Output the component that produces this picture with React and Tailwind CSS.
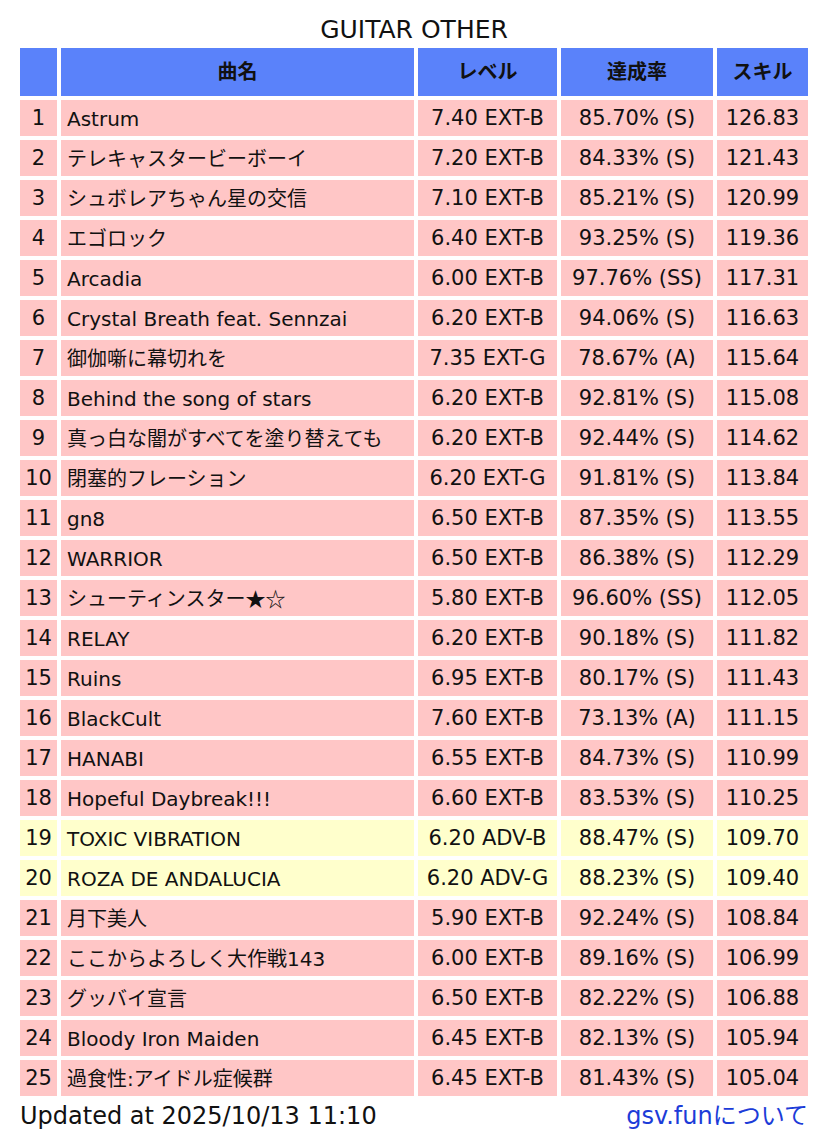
const rows = [
  ['Astrum', '7.40 EXT-B', '85.70% (S)', '126.83'],
  ['テレキャスタービーボーイ', '7.20 EXT-B', '84.33% (S)', '121.43'],
  ['シュボレアちゃん星の交信', '7.10 EXT-B', '85.21% (S)', '120.99'],
  ['エゴロック', '6.40 EXT-B', '93.25% (S)', '119.36'],
  ['Arcadia', '6.00 EXT-B', '97.76% (SS)', '117.31'],
  ['Crystal Breath feat. Sennzai', '6.20 EXT-B', '94.06% (S)', '116.63'],
  ['御伽噺に幕切れを', '7.35 EXT-G', '78.67% (A)', '115.64'],
  ['Behind the song of stars', '6.20 EXT-B', '92.81% (S)', '115.08'],
  ['真っ白な闇がすべてを塗り替えても', '6.20 EXT-B', '92.44% (S)', '114.62'],
  ['閉塞的フレーション', '6.20 EXT-G', '91.81% (S)', '113.84'],
  ['gn8', '6.50 EXT-B', '87.35% (S)', '113.55'],
  ['WARRIOR', '6.50 EXT-B', '86.38% (S)', '112.29'],
  ['シューティンスター★☆', '5.80 EXT-B', '96.60% (SS)', '112.05'],
  ['RELAY', '6.20 EXT-B', '90.18% (S)', '111.82'],
  ['Ruins', '6.95 EXT-B', '80.17% (S)', '111.43'],
  ['BlackCult', '7.60 EXT-B', '73.13% (A)', '111.15'],
  ['HANABI', '6.55 EXT-B', '84.73% (S)', '110.99'],
  ['Hopeful Daybreak!!!', '6.60 EXT-B', '83.53% (S)', '110.25'],
  ['TOXIC VIBRATION', '6.20 ADV-B', '88.47% (S)', '109.70'],
  ['ROZA DE ANDALUCIA', '6.20 ADV-G', '88.23% (S)', '109.40'],
  ['月下美人', '5.90 EXT-B', '92.24% (S)', '108.84'],
  ['ここからよろしく大作戦143', '6.00 EXT-B', '89.16% (S)', '106.99'],
  ['グッバイ宣言', '6.50 EXT-B', '82.22% (S)', '106.88'],
  ['Bloody Iron Maiden', '6.45 EXT-B', '82.13% (S)', '105.94'],
  ['過食性:アイドル症候群', '6.45 EXT-B', '81.43% (S)', '105.04'],
];

const font = { fontFamily: '"DejaVu Sans", Verdana, "Noto Sans CJK JP", sans-serif' };

// stars render full width in the reference, so give them the CJK face
function Name({ text }) {
  const m = text.match(/^(.*?)([★☆]+)$/);
  if (!m) return text;
  return (
    <>
      {m[1]}
      <span className="font-['Noto_Sans_CJK_JP']">{m[2]}</span>
    </>
  );
}

export default function App() {
  return (
    <div className="w-[828px] min-h-[1133px] bg-white text-[#111]" style={font}>
      <div className="mx-[20px] w-[788px]">
        <h1 className="pt-[15px] pb-[3px] text-center text-[25px] leading-[30px] font-normal">GUITAR OTHER</h1>

        <div className="grid grid-cols-[37px_353px_139px_152px_91px] gap-[4px] text-[21px]">
          <div className="h-[48px] bg-[#5a82fa]" />
          <div className="flex h-[48px] items-center justify-center bg-[#5a82fa] text-[20px] font-bold">曲名</div>
          <div className="flex h-[48px] items-center justify-center bg-[#5a82fa] text-[20px] font-bold">レベル</div>
          <div className="flex h-[48px] items-center justify-center bg-[#5a82fa] text-[20px] font-bold">達成率</div>
          <div className="flex h-[48px] items-center justify-center bg-[#5a82fa] text-[20px] font-bold">スキル</div>

          {rows.map(([name, level, rate, skill], i) => {
            const bg = level.includes('ADV') ? 'bg-[#ffffcc]' : 'bg-[#ffc6c6]';
            return [
              <div key={i + 'n'} className={`flex h-[36px] items-center justify-center pt-[2px] ${bg}`}>{i + 1}</div>,
              <div key={i + 's'} className={`flex h-[36px] items-center px-[6px] pt-[2px] text-[20px] whitespace-nowrap ${bg}`}>
                <Name text={name} />
              </div>,
              <div key={i + 'l'} className={`flex h-[36px] items-center justify-center pt-[2px] ${bg}`}>{level}</div>,
              <div key={i + 'r'} className={`flex h-[36px] items-center justify-center pt-[2px] ${bg}`}>{rate}</div>,
              <div key={i + 'k'} className={`flex h-[36px] items-center justify-center pt-[2px] ${bg}`}>{skill}</div>,
            ];
          })}
        </div>

        <div className="mt-[4px] flex items-center justify-between leading-[32px]">
          <span className="text-[24px]">Updated at 2025/10/13 11:10</span>
          <a href="#" className="text-[24px] text-[#1c3cd8]">gsv.funについて</a>
        </div>
      </div>
    </div>
  );
}
